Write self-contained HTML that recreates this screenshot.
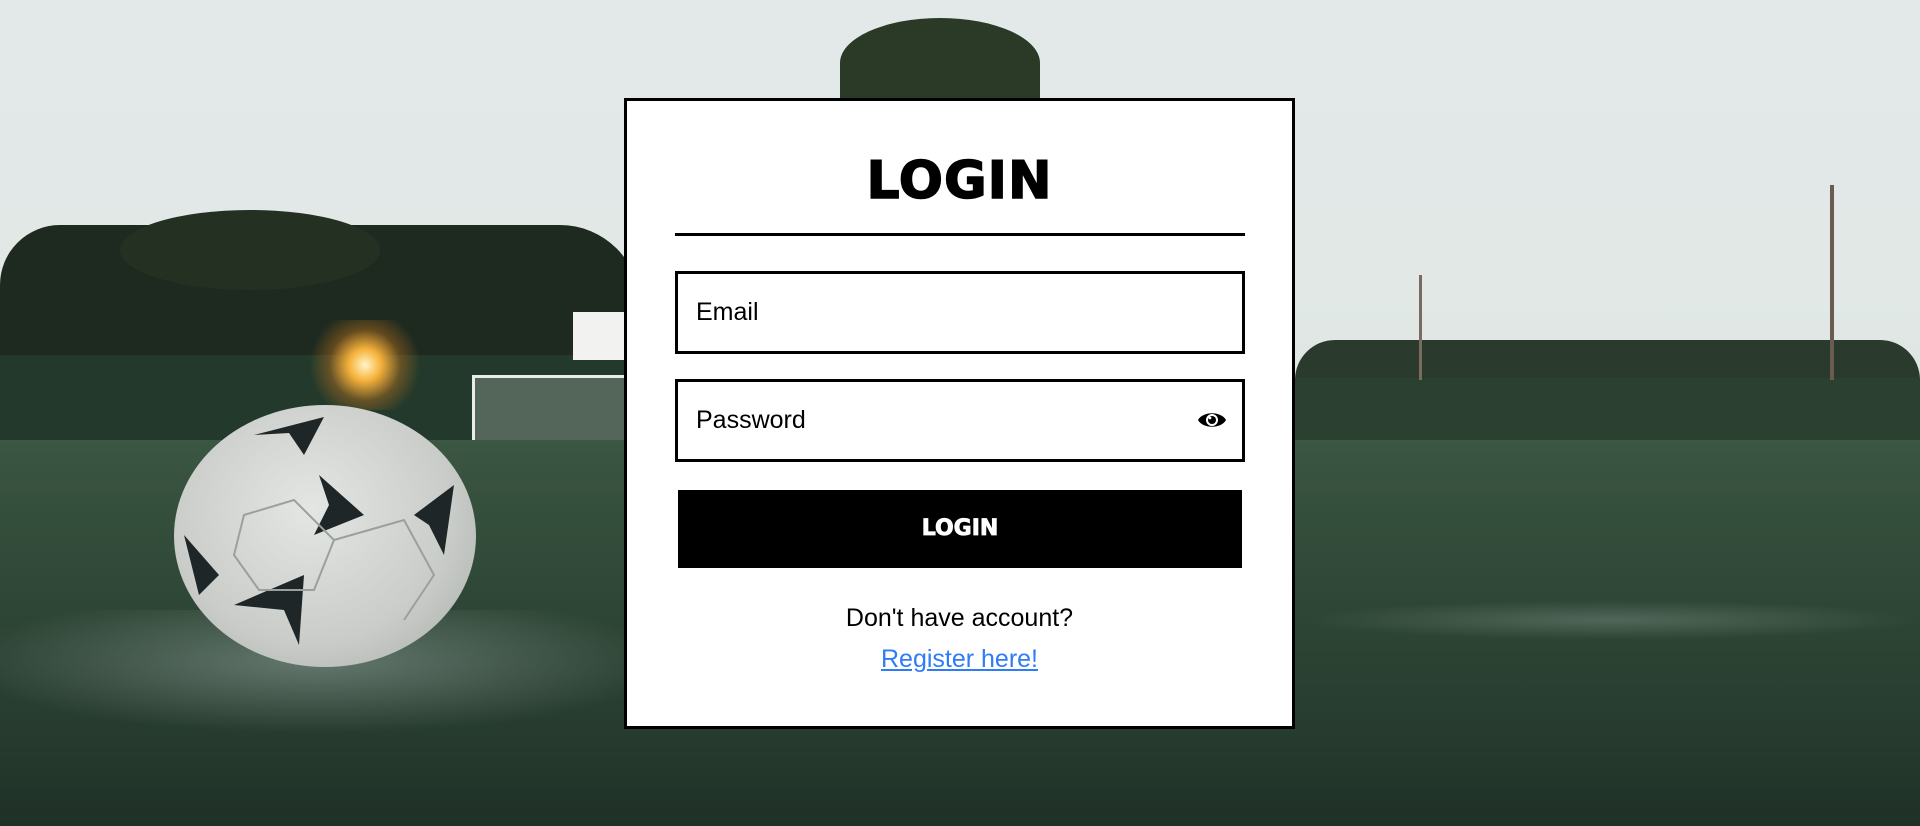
<!DOCTYPE html>
<html><head><meta charset="utf-8"><style>
*{margin:0;padding:0;box-sizing:border-box}
html,body{width:1920px;height:826px;overflow:hidden;font-family:"Liberation Sans","DejaVu Sans",sans-serif}
.bg{position:absolute;inset:0;background:linear-gradient(#e3e9e8 0,#e1e8e6 300px,#dde4e1 420px)}
.abs{position:absolute}
.card{position:absolute;left:624px;top:98px;width:671px;height:631px;background:#fff;border:3px solid #000}
.title{position:absolute;left:0;right:0;top:50px;text-align:center;font-weight:900;font-size:52px;letter-spacing:1px;font-family:"DejaVu Sans","Liberation Sans",sans-serif;-webkit-text-stroke:1.5px #000}
.hr{position:absolute;left:48px;width:570px;top:132px;height:3px;background:#000}
.inp{position:absolute;left:48px;width:570px;height:83px;border:3px solid #000;font-size:25px;padding-left:18px;line-height:77px}
.btn{position:absolute;left:51px;width:564px;top:389px;height:78px;background:#000;color:#fff;text-align:center;line-height:78px;font-weight:900;font-size:22px;font-family:"DejaVu Sans",sans-serif;-webkit-text-stroke:.8px #fff}
.t{position:absolute;left:0;right:0;text-align:center;font-size:25px}
</style></head><body>
<div class="bg"></div>
<div class="abs" style="left:0;top:225px;width:640px;height:140px;background:#1e2a1f;border-radius:60px 80px 0 0"></div>
<div class="abs" style="left:120px;top:210px;width:260px;height:80px;background:#243022;border-radius:50%"></div>
<div class="abs" style="left:840px;top:18px;width:200px;height:90px;background:#2b3a27;border-radius:50% 50% 0 0"></div>
<div class="abs" style="left:0;top:355px;width:640px;height:90px;background:#23392b"></div>
<div class="abs" style="left:300px;top:320px;width:130px;height:90px;background:radial-gradient(circle,#fff6c8 0,#f6b23c 20%,rgba(200,120,30,.4) 45%,rgba(0,0,0,0) 70%)"></div>
<div class="abs" style="left:573px;top:312px;width:52px;height:48px;background:#f2f2f0"></div>
<div class="abs" style="left:472px;top:375px;width:160px;height:70px;border:3px solid #e8ecea;border-bottom:none;background:rgba(200,205,200,.3)"></div>
<div class="abs" style="left:1295px;top:340px;width:625px;height:50px;background:#2a3a2c;border-radius:40px 40px 0 0"></div>
<div class="abs" style="left:1295px;top:378px;width:625px;height:87px;background:#2b4031"></div>
<div class="abs" style="left:1830px;top:185px;width:4px;height:195px;background:#6a5b50"></div>
<div class="abs" style="left:1419px;top:275px;width:3px;height:105px;background:#7a6b60"></div>
<div class="abs" style="left:1750px;top:442px;width:118px;height:24px;background:#e8eef5"></div>
<div class="abs" style="left:1876px;top:442px;width:44px;height:24px;background:#e6e2d8"></div>
<div class="abs" style="left:0;top:440px;width:1920px;height:386px;background:linear-gradient(#3b5642,#314a39 120px,#263b2e 300px,#1f3026)"></div>
<div class="abs" style="left:0;top:610px;width:700px;height:130px;background:radial-gradient(ellipse at 45% 40%,rgba(170,185,180,.45),rgba(0,0,0,0) 65%)"></div>
<div class="abs" style="left:1300px;top:600px;width:620px;height:40px;background:radial-gradient(ellipse,rgba(160,180,170,.3),rgba(0,0,0,0) 70%)"></div>
<div class="abs" style="left:174px;top:405px;width:302px;height:262px;border-radius:50%;background:radial-gradient(ellipse at 45% 40%,#e4e6e3,#c9ccc8 60%,#a5aaa6);overflow:hidden">
<svg width="302" height="262" viewBox="0 0 302 262"><g fill="#1e2628">
<path d="M80 30 L150 12 L130 50 L115 28 Z"/><path d="M145 70 L190 110 L140 130 L155 100 Z"/>
<path d="M240 110 L280 80 L270 150 L255 120 Z"/><path d="M60 200 L130 170 L125 240 L110 205 Z"/>
<path d="M10 130 L25 190 L45 170 Z"/></g>
<g fill="none" stroke="#9aa09c" stroke-width="2"><path d="M70 110 L120 95 L160 135 L140 185 L85 185 L60 150 Z"/><path d="M160 135 L230 115 L260 170 L230 215"/></g></svg></div>
<div class="card">
<div class="title">LOGIN</div>
<div class="hr"></div>
<div class="inp" style="top:170px">Email</div>
<div class="inp" style="top:278px">Password
<svg class="abs" style="left:519px;top:27px" width="30" height="22" viewBox="0 0 30 22"><path d="M1 11 C6 2 24 2 29 11 C24 20 6 20 1 11 Z" fill="#000"/><circle cx="15" cy="11" r="6" fill="#fff"/><circle cx="15" cy="11" r="4" fill="#000"/><circle cx="13" cy="9" r="1.4" fill="#fff"/></svg></div>
<div class="btn">LOGIN</div>
<div class="t" style="top:503px">Don't have account?</div>
<div class="t" style="top:544px"><span style="color:#2f7cf6;text-decoration:underline">Register here!</span></div>
</div>
</body></html>
